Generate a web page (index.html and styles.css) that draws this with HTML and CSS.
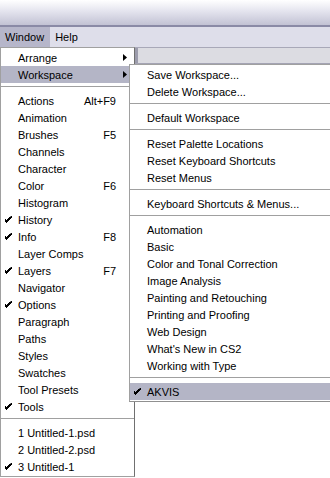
FILE: index.html
```
<!DOCTYPE html>
<html lang="en">
<head>
    <meta charset="UTF-8">
    <title>Window menu</title>
    <link rel="stylesheet" href="styles.css">
</head>
<body>
    <div class="titlebar"></div>
    <div class="menubar">
        <span class="menubar-item active">Window</span>
        <span class="menubar-item">Help</span>
    </div>
    <div class="toolbar"><span class="grip"></span></div>

    <svg width="0" height="0" class="defs">
        <defs>
            <symbol id="check" viewBox="0 0 7 7">
                <path d="M6 0h1v2h-1v1h-1v1h-1v1h-1v1h-1v1h-1v-1h-1v-1h-1v-3h1v1h1v1h1v-1h1v-1h1v-1h1z"/>
            </symbol>
            <symbol id="arrow" viewBox="0 0 4 7">
                <path d="M0 0L4 3.5L0 7z"/>
            </symbol>
        </defs>
    </svg>

    <ul class="menu main-menu">
        <li class="item sub">Arrange<svg class="arrow"><use href="#arrow"/></svg></li>
        <li class="item sub hover">Workspace<svg class="arrow"><use href="#arrow"/></svg></li>
        <li class="sep"></li>
        <li class="item">Actions<span class="key">Alt+F9</span></li>
        <li class="item">Animation</li>
        <li class="item">Brushes<span class="key">F5</span></li>
        <li class="item">Channels</li>
        <li class="item">Character</li>
        <li class="item">Color<span class="key">F6</span></li>
        <li class="item">Histogram</li>
        <li class="item checked"><svg class="check"><use href="#check"/></svg>History</li>
        <li class="item checked"><svg class="check"><use href="#check"/></svg>Info<span class="key">F8</span></li>
        <li class="item">Layer Comps</li>
        <li class="item checked"><svg class="check"><use href="#check"/></svg>Layers<span class="key">F7</span></li>
        <li class="item">Navigator</li>
        <li class="item checked"><svg class="check"><use href="#check"/></svg>Options</li>
        <li class="item">Paragraph</li>
        <li class="item">Paths</li>
        <li class="item">Styles</li>
        <li class="item">Swatches</li>
        <li class="item">Tool Presets</li>
        <li class="item checked"><svg class="check"><use href="#check"/></svg>Tools</li>
        <li class="sep"></li>
        <li class="item">1 Untitled-1.psd</li>
        <li class="item">2 Untitled-2.psd</li>
        <li class="item checked"><svg class="check"><use href="#check"/></svg>3 Untitled-1</li>
    </ul>

    <ul class="menu sub-menu">
        <li class="item">Save Workspace...</li>
        <li class="item">Delete Workspace...</li>
        <li class="sep"></li>
        <li class="item">Default Workspace</li>
        <li class="sep"></li>
        <li class="item">Reset Palette Locations</li>
        <li class="item">Reset Keyboard Shortcuts</li>
        <li class="item">Reset Menus</li>
        <li class="sep"></li>
        <li class="item">Keyboard Shortcuts &amp; Menus...</li>
        <li class="sep"></li>
        <li class="item">Automation</li>
        <li class="item">Basic</li>
        <li class="item">Color and Tonal Correction</li>
        <li class="item">Image Analysis</li>
        <li class="item">Painting and Retouching</li>
        <li class="item">Printing and Proofing</li>
        <li class="item">Web Design</li>
        <li class="item">What's New in CS2</li>
        <li class="item">Working with Type</li>
        <li class="sep"></li>
        <li class="item checked hover"><svg class="check"><use href="#check"/></svg>AKVIS</li>
    </ul>
</body>
</html>
```

FILE: styles.css
```
html, body {
    margin: 0;
    padding: 0;
    height: 100%;
    overflow: hidden;
}

body {
    position: relative;
    background: #ffffff;
    font-family: "Liberation Sans", Arial, sans-serif;
    font-size: 11px;
    color: #000000;
}

.defs {
    position: absolute;
}

.titlebar {
    height: 25px;
    background: linear-gradient(to bottom, #ffffff 0%, #e4e4ee 45%, #c2c2d4 100%);
    border-bottom: 2px solid #8a8aa6;
}

.menubar {
    display: flex;
    height: 20px;
    background: #dedeea;
    border-bottom: 1px solid #a8a8b8;
}

.menubar-item {
    display: flex;
    align-items: center;
    padding: 0 5px;
}

.menubar-item.active {
    background: #b6b6ca;
    padding-right: 6px;
}

.toolbar {
    height: 15px;
    background: #dcdce2;
    border-bottom: 2px solid #a4a4b4;
}

.grip {
    display: block;
    margin-left: 135px;
    width: 3px;
    height: 15px;
    background: #9c9cac;
}

.menu {
    position: absolute;
    margin: 0;
    padding: 1px 0;
    list-style: none;
    background: #ffffff;
    border: 1px solid #a0a0a0;
}

.main-menu {
    top: 47px;
    left: 0;
    width: 133px;
    border-right-color: #707070;
}

.sub-menu {
    top: 64px;
    left: 129px;
    width: 200px;
    border-right: none;
    border-bottom-color: #909090;
}

.item {
    position: relative;
    display: flex;
    align-items: center;
    height: 17px;
    padding-left: 17px;
    white-space: nowrap;
}

.item.hover {
    background: #b4b5c6;
}

.key {
    margin-left: auto;
    margin-right: 18px;
}

.check {
    position: absolute;
    left: 4px;
    top: 5px;
    width: 7px;
    height: 7px;
}

.arrow {
    position: absolute;
    left: 122px;
    top: 5px;
    width: 4px;
    height: 7px;
}

.sep {
    box-sizing: border-box;
    height: 9px;
    padding-top: 3px;
}

.sep::before {
    content: "";
    display: block;
    border-top: 1px solid #a0a0a0;
}
```
